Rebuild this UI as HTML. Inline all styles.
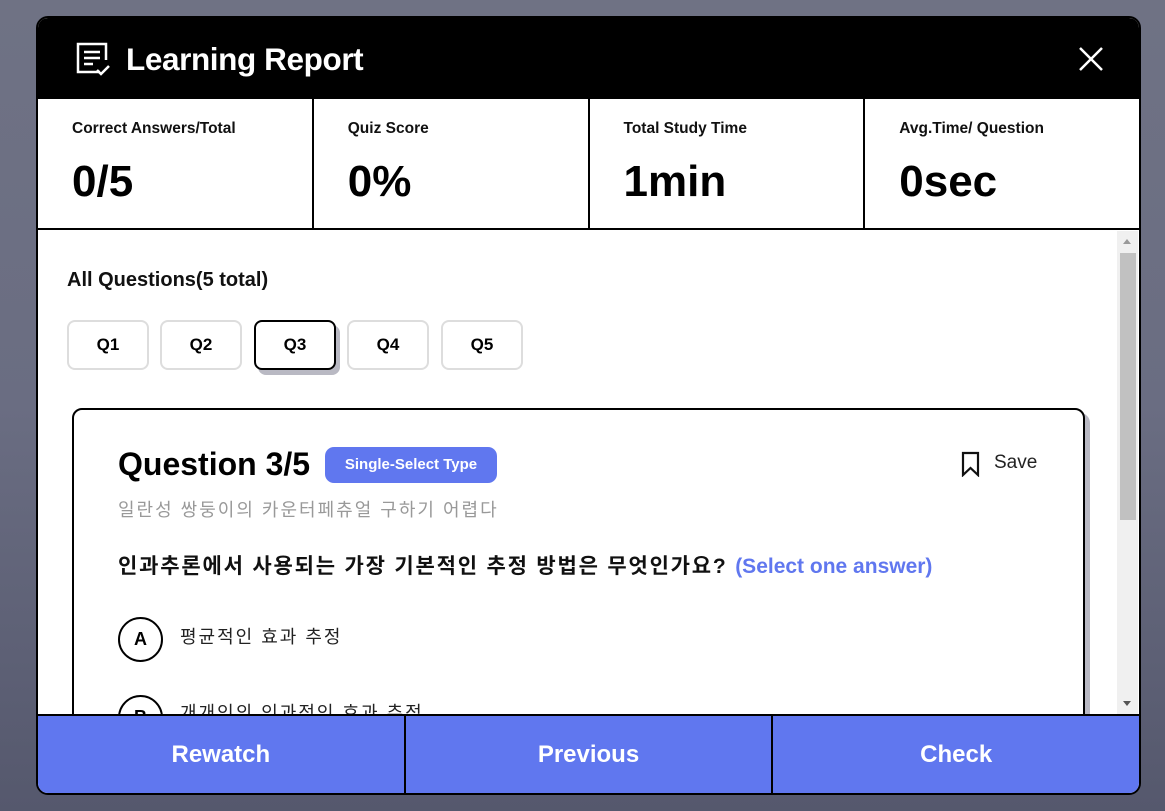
<!DOCTYPE html>
<html><head><meta charset="utf-8"><style>
*{box-sizing:border-box;margin:0;padding:0}
body{width:1165px;height:811px;overflow:hidden;background:linear-gradient(180deg,#6f7284 0%,#6a6d82 50%,#55586d 100%);font-family:"Liberation Sans","Noto Sans CJK KR",sans-serif;position:relative}
.modal{position:absolute;left:36px;top:16px;width:1105px;height:779px;border:2px solid #000;border-radius:12px;background:#fff;overflow:hidden}
.hdr{position:absolute;left:0;top:0;width:100%;height:81px;background:#000;color:#fff}
.hdr .t{position:absolute;left:88px;top:23px;font-size:31.5px;font-weight:bold;letter-spacing:-0.4px}
.stats{position:absolute;left:0;top:81px;width:100%;height:131px;border-bottom:2px solid #000;display:flex}
.st{flex:1;border-right:2px solid #000;padding:21px 0 0 34px}
.st:last-child{border-right:none}
.st .l{font-size:15.5px;font-weight:bold;color:#111}
.st .v{font-size:44px;font-weight:bold;margin-top:19px;color:#000}
.sb{position:absolute;left:1079px;top:213px;width:21px;height:485px;background:#f0f0f0}
.sb .th{position:absolute;left:3px;top:22px;width:16px;height:267px;background:#c1c1c1}
.aq{position:absolute;left:29px;top:251px;font-size:20px;font-weight:bold;color:#111}
.qb{position:absolute;top:302px;width:82px;height:50px;border:2px solid #ddd;border-radius:8px;font-size:17px;font-weight:bold;text-align:center;line-height:46px;background:#fff}
.qb.a{border-color:#000;box-shadow:4px 5px 0 #b9b9c3}
.card{position:absolute;left:34px;top:390px;width:1013px;height:400px;border:2px solid #000;border-radius:10px;background:#fff;box-shadow:5px 5px 0 #b9b9c3}
.qt{position:absolute;left:44px;top:36px;font-size:32px;font-weight:bold}
.tag{position:absolute;left:251px;top:37px;width:172px;height:36px;border-radius:9px;background:#6077ef;color:#fff;font-size:15px;font-weight:bold;text-align:center;line-height:36px}
.save{position:absolute;left:888px;top:42px;font-size:19px;color:#222}
.sub{position:absolute;left:44px;top:86px;font-size:18px;color:#999;letter-spacing:2px}
.qq{position:absolute;left:44px;top:140px;font-size:21px;font-weight:bold;color:#111;letter-spacing:1.8px;white-space:nowrap}
.qq span{color:#6077ef;letter-spacing:0}
.opt{position:absolute;left:44px;width:45px;height:45px;border:2px solid #000;border-radius:50%;text-align:center;line-height:41px;font-weight:bold;font-size:18px}
.ot{position:absolute;left:106px;font-size:18px;color:#222;letter-spacing:2px}
.ftr{position:absolute;left:0;top:696px;width:100%;height:81px;border-top:2px solid #000;display:flex;background:#6077ef}
.fb{flex:1;color:#fff;font-weight:bold;font-size:24px;text-align:center;line-height:78px;border-right:2px solid #000}
.fb:last-child{border-right:none}
</style></head><body>
<div class="modal">
 <div class="hdr">
  <svg style="position:absolute;left:38px;top:24px" width="36" height="36" viewBox="0 0 36 36" fill="none" stroke="#fff" stroke-width="2.5"><path d="M24 30H2V2h28v16"/><path d="M8 10h16M8 16h16M8 22h9"/><path d="M21 28l4 4 8-8"/></svg>
  <div class="t">Learning Report</div>
  <svg style="position:absolute;left:1041px;top:29px" width="24" height="24" viewBox="0 0 24 24" stroke="#fff" stroke-width="2.5"><path d="M1 1L23 23M23 1L1 23"/></svg>
 </div>
 <div class="stats">
  <div class="st"><div class="l">Correct Answers/Total</div><div class="v">0/5</div></div>
  <div class="st"><div class="l">Quiz Score</div><div class="v">0%</div></div>
  <div class="st"><div class="l">Total Study Time</div><div class="v">1min</div></div>
  <div class="st"><div class="l">Avg.Time/ Question</div><div class="v">0sec</div></div>
 </div>
 <div class="sb"><div class="th"></div>
  <div style="position:absolute;left:6px;top:8px;border:4px solid transparent;border-bottom:5px solid #999;border-top:none"></div>
  <div style="position:absolute;left:6px;top:470px;border:4px solid transparent;border-top:5px solid #555;border-bottom:none"></div>
 </div>
 <div class="aq">All Questions(5 total)</div>
 <div class="qb" style="left:29px">Q1</div>
 <div class="qb" style="left:122px">Q2</div>
 <div class="qb a" style="left:216px">Q3</div>
 <div class="qb" style="left:309px">Q4</div>
 <div class="qb" style="left:403px">Q5</div>
 <div class="card">
  <div class="qt">Question 3/5</div>
  <div class="tag">Single-Select Type</div>
  <svg style="position:absolute;left:886px;top:41px" width="22" height="26" viewBox="0 0 22 26" fill="none" stroke="#111" stroke-width="2.2"><path d="M3 2h15v22l-7.5-7L3 24z"/></svg>
  <div class="save" style="left:920px">Save</div>
  <div class="sub">일란성 쌍둥이의 카운터페츄얼 구하기 어렵다</div>
  <div class="qq">인과추론에서 사용되는 가장 기본적인 추정 방법은 무엇인가요? <span>(Select one answer)</span></div>
  <div class="opt" style="top:207px">A</div><div class="ot" style="top:213px">평균적인 효과 추정</div>
  <div class="opt" style="top:285px">B</div><div class="ot" style="top:289px">개개인의 인과적인 효과 추정</div>
 </div>
 <div class="ftr"><div class="fb">Rewatch</div><div class="fb">Previous</div><div class="fb">Check</div></div>
</div>
</body></html>
